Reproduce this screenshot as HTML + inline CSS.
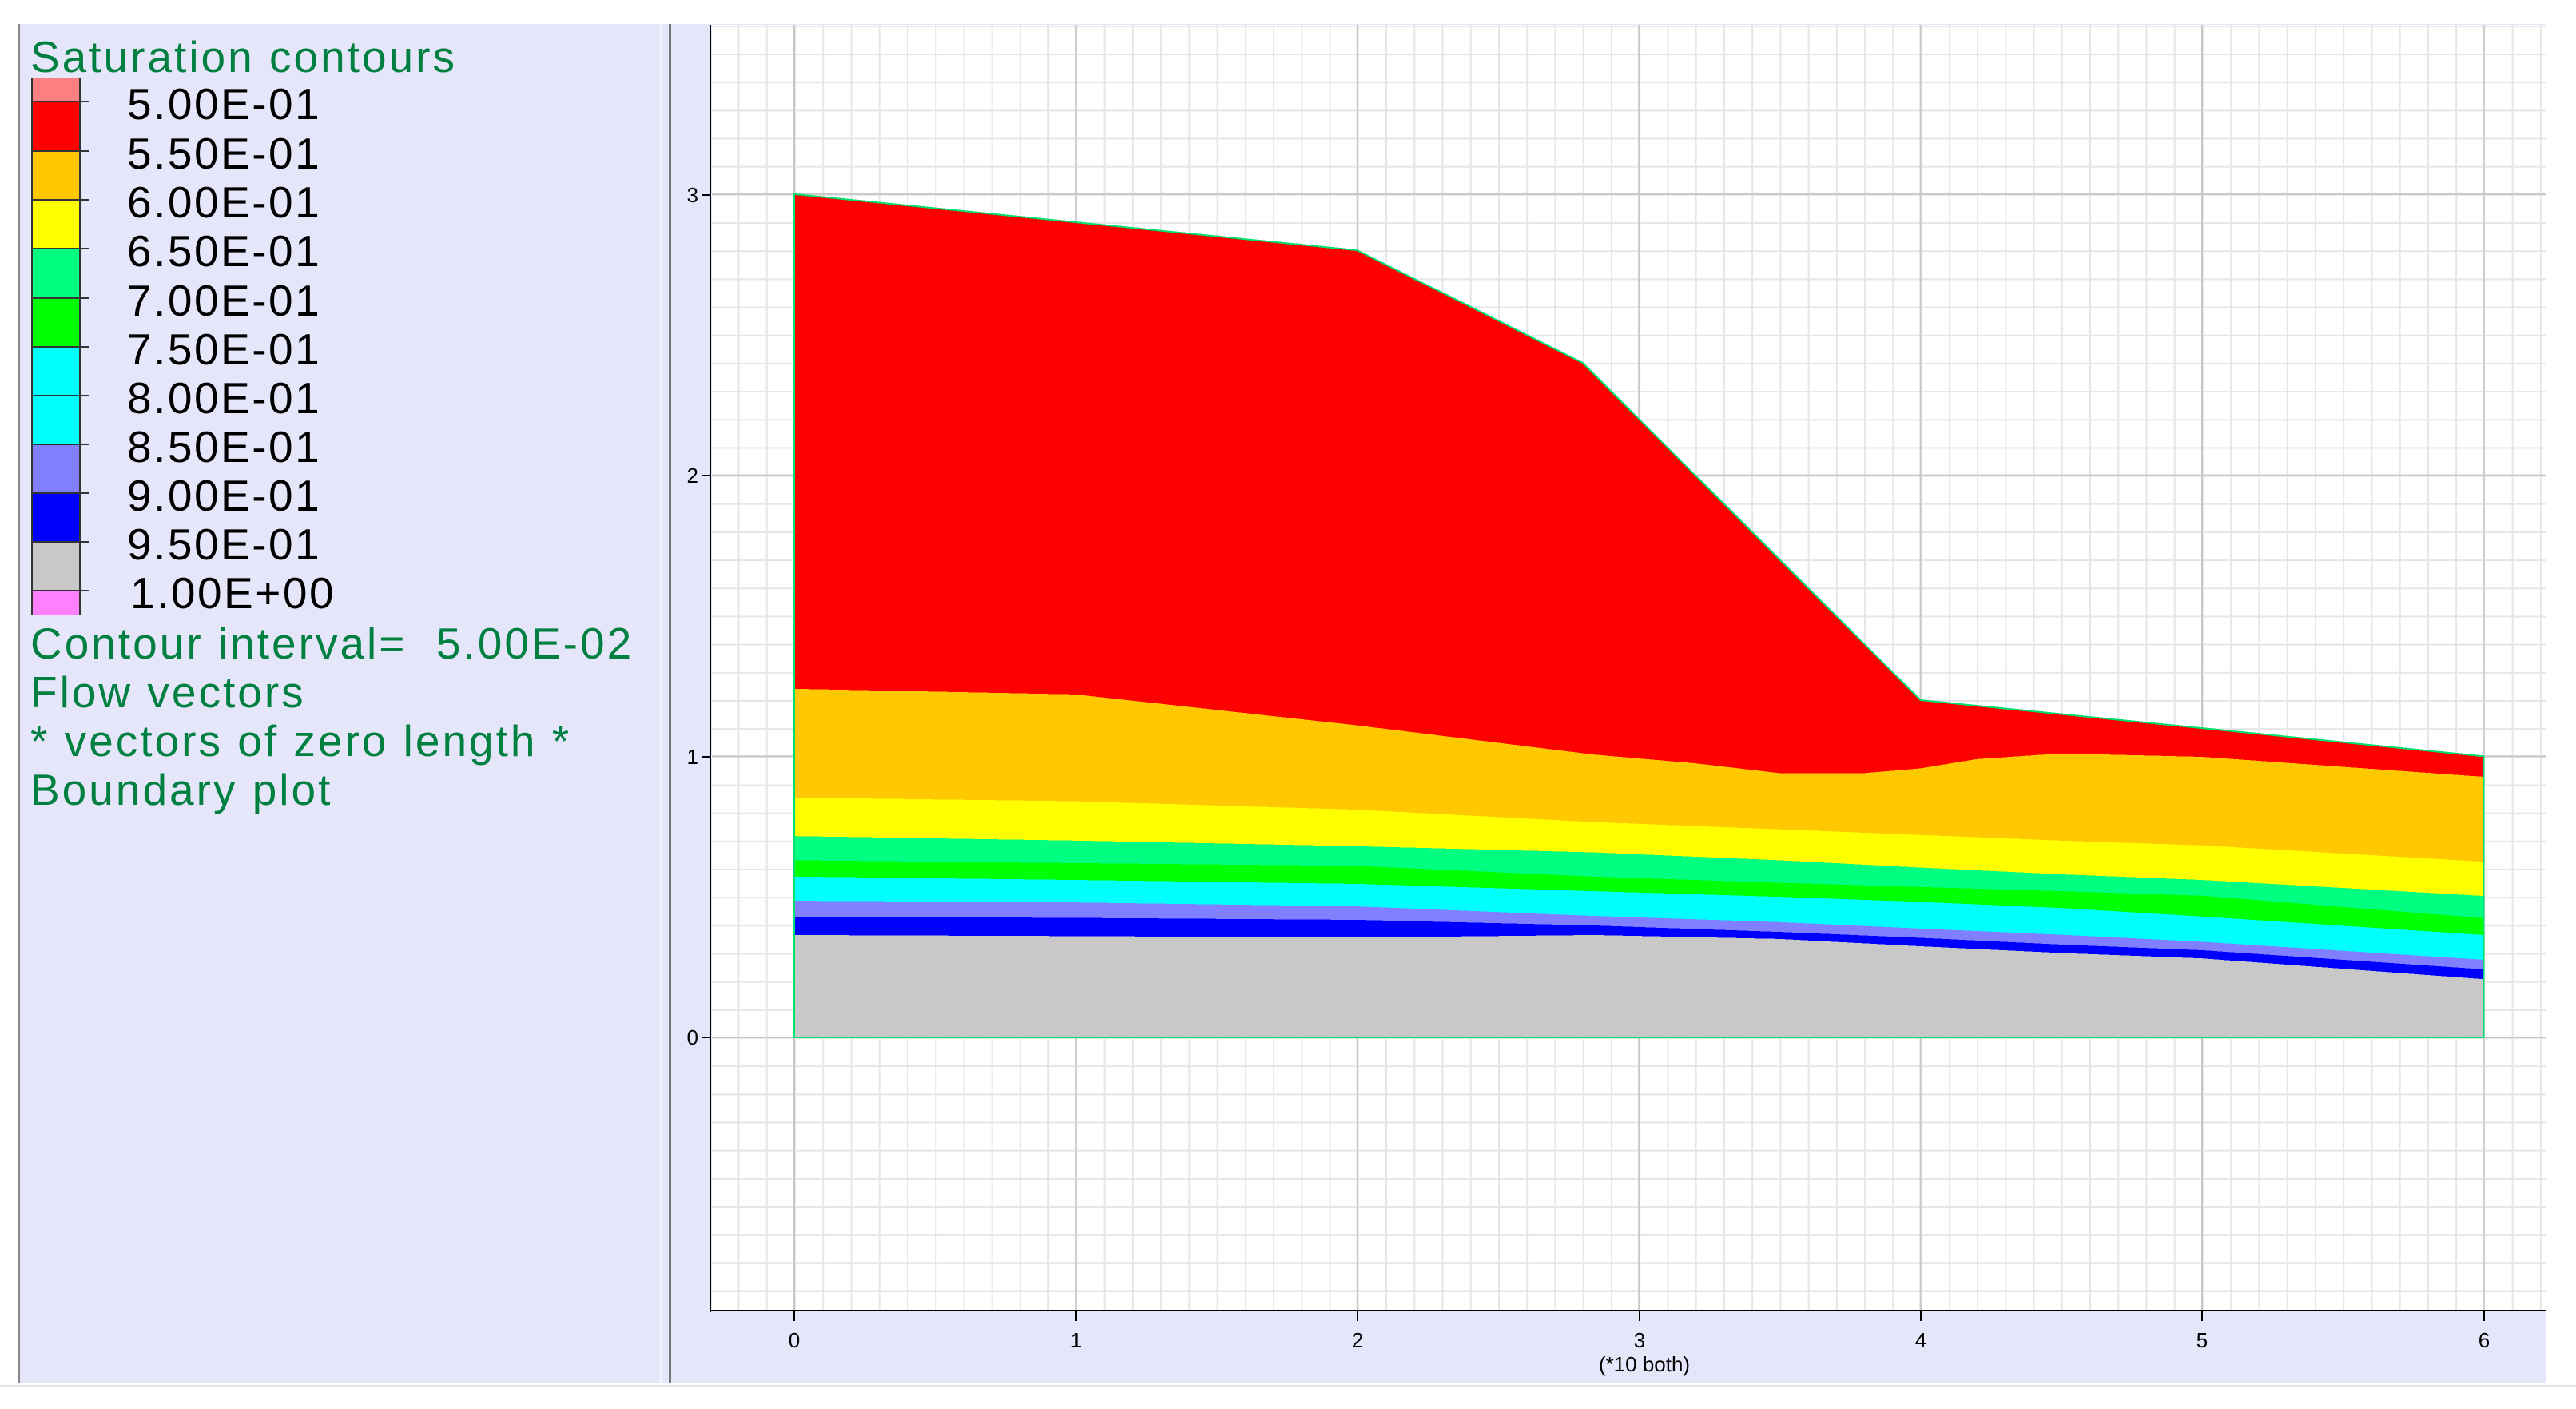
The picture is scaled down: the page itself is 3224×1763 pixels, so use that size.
<!DOCTYPE html>
<html><head><meta charset="utf-8"><style>
html,body{margin:0;padding:0;background:#fff;width:3224px;height:1763px;overflow:hidden}
svg{display:block}
text{font-family:"Liberation Sans",Arial,sans-serif}
</style></head><body>
<svg width="3224" height="1763" viewBox="0 0 3224 1763" xmlns="http://www.w3.org/2000/svg">
<defs>
<pattern id="minor" patternUnits="userSpaceOnUse" x="994" y="1298" width="35.24" height="35.17">
<rect x="0" y="0" width="2" height="35.17" fill="#e6e6e6"/>
<rect x="0" y="0" width="35.24" height="2" fill="#e6e6e6"/>
</pattern>
<pattern id="major" patternUnits="userSpaceOnUse" x="993" y="1297" width="352.4" height="351.7">
<rect x="0" y="0" width="2" height="351.7" fill="#c8c8c8"/>
<rect x="0" y="0" width="352.4" height="2" fill="#c8c8c8"/>
</pattern>
</defs>
<rect x="22" y="30" width="3164" height="1701" fill="#e6e6fa"/>
<rect x="22" y="30" width="3" height="1701" fill="#888"/>
<rect x="826" y="30" width="3" height="1701" fill="#f4f4fc"/>
<rect x="837" y="30" width="3" height="1701" fill="#777"/>
<rect x="891" y="31" width="2295" height="1609" fill="#fff"/>
<rect x="891" y="31" width="2295" height="1609" fill="url(#minor)"/>
<rect x="891" y="31" width="2295" height="1609" fill="url(#major)"/>
<rect x="0" y="1731" width="3224" height="32" fill="#fff"/>
<rect x="0" y="1733" width="3224" height="3" fill="#e4e4e4"/>

<g transform="translate(994,1298) scale(352.4,-351.7)" shape-rendering="crispEdges">
<polygon fill="#c8c8c8" points="0,0 0,3 2,2.8 2.8,2.4 4,1.2 6,1.0 6,0"/>
<polygon fill="#0000ff" points="0,3 2,2.8 2.8,2.4 4,1.2 6,1.0 6,0.207 5,0.281 4.5,0.30 4,0.324 3.5,0.35 2.84,0.364 2,0.355 1,0.36 0,0.364"/>
<polygon fill="#8080ff" points="0,3 2,2.8 2.8,2.4 4,1.2 6,1.0 6,0.242 5,0.31 4.5,0.33 4,0.354 3.5,0.375 2.84,0.398 2,0.418 1,0.425 0,0.43"/>
<polygon fill="#00ffff" points="0,3 2,2.8 2.8,2.4 4,1.2 6,1.0 6,0.276 5,0.34 4.5,0.365 4,0.387 3.5,0.41 2.84,0.432 2,0.466 1,0.48 0,0.486"/>
<polygon fill="#00ff00" points="0,3 2,2.8 2.8,2.4 4,1.2 6,1.0 6,0.364 5,0.43 4.5,0.46 4,0.482 3.5,0.50 2.84,0.52 2,0.546 1,0.56 0,0.572"/>
<polygon fill="#00ff80" points="0,3 2,2.8 2.8,2.4 4,1.2 6,1.0 6,0.424 5,0.504 4.5,0.52 4,0.535 3.5,0.55 2.84,0.572 2,0.61 1,0.62 0,0.63"/>
<polygon fill="#ffff00" points="0,3 2,2.8 2.8,2.4 4,1.2 6,1.0 6,0.503 5,0.56 4.5,0.58 4,0.604 3.5,0.63 2.84,0.658 2,0.68 1,0.70 0,0.716"/>
<polygon fill="#ffc800" points="0,3 2,2.8 2.8,2.4 4,1.2 6,1.0 6,0.625 5,0.683 4.5,0.70 4,0.72 3.5,0.74 2.84,0.766 2,0.81 1,0.84 0,0.853"/>
<polygon fill="#ff0000" points="0,3 2,2.8 2.8,2.4 4,1.2 6,1.0 6,0.927 5,0.998 4.5,1.01 4.2,0.99 4,0.957 3.8,0.94 3.5,0.94 3.2,0.975 2.84,1.006 2,1.11 1,1.22 0,1.24"/>
<polygon fill="none" stroke="#00e070" stroke-width="2" vector-effect="non-scaling-stroke" points="0,0 0,3 2,2.8 2.8,2.4 4,1.2 6,1.0 6,0"/>
</g>

<rect x="888" y="31" width="2" height="1611" fill="#000"/>
<rect x="888" y="1639" width="2298" height="2" fill="#000"/>
<g fill="#000">
<rect x="878" y="1297" width="11" height="2"/>
<rect x="878" y="946" width="11" height="2"/>
<rect x="878" y="594" width="11" height="2"/>
<rect x="878" y="243" width="11" height="2"/>
<rect x="993" y="1641" width="2" height="12"/>
<rect x="1346" y="1641" width="2" height="12"/>
<rect x="1698" y="1641" width="2" height="12"/>
<rect x="2051" y="1641" width="2" height="12"/>
<rect x="2403" y="1641" width="2" height="12"/>
<rect x="2755" y="1641" width="2" height="12"/>
<rect x="3108" y="1641" width="2" height="12"/>
</g>
<g font-size="26" fill="#000">
<text x="874" y="1307" text-anchor="end">0</text>
<text x="874" y="956" text-anchor="end">1</text>
<text x="874" y="604" text-anchor="end">2</text>
<text x="874" y="253" text-anchor="end">3</text>
<g text-anchor="middle">
<text x="994" y="1686">0</text>
<text x="1347" y="1686">1</text>
<text x="1699" y="1686">2</text>
<text x="2052" y="1686">3</text>
<text x="2404" y="1686">4</text>
<text x="2756" y="1686">5</text>
<text x="3109" y="1686">6</text>
<text x="2058" y="1716">(*10 both)</text>
</g>
</g>

<g shape-rendering="crispEdges">
<rect x="40" y="97" width="60" height="30" fill="#ff8080"/>
<rect x="40" y="127" width="60" height="62" fill="#ff0000"/>
<rect x="40" y="189" width="60" height="61" fill="#ffc800"/>
<rect x="40" y="250" width="60" height="61" fill="#ffff00"/>
<rect x="40" y="311" width="60" height="62" fill="#00ff80"/>
<rect x="40" y="373" width="60" height="61" fill="#00ff00"/>
<rect x="40" y="434" width="60" height="61" fill="#00ffff"/>
<rect x="40" y="495" width="60" height="61" fill="#00ffff"/>
<rect x="40" y="556" width="60" height="61" fill="#8080ff"/>
<rect x="40" y="617" width="60" height="61" fill="#0000ff"/>
<rect x="40" y="678" width="60" height="61" fill="#c8c8c8"/>
<rect x="40" y="739" width="60" height="31" fill="#ff80ff"/>
<rect x="39" y="97" width="2" height="673" fill="#333"/>
<rect x="99" y="97" width="2" height="673" fill="#333"/>
<g fill="#333">
<rect x="40" y="126" width="72" height="2"/>
<rect x="40" y="188" width="72" height="2"/>
<rect x="40" y="249" width="72" height="2"/>
<rect x="40" y="310" width="72" height="2"/>
<rect x="40" y="372" width="72" height="2"/>
<rect x="40" y="433" width="72" height="2"/>
<rect x="40" y="494" width="72" height="2"/>
<rect x="40" y="555" width="72" height="2"/>
<rect x="40" y="616" width="72" height="2"/>
<rect x="40" y="677" width="72" height="2"/>
<rect x="40" y="738" width="72" height="2"/>
</g>
</g>
<g font-size="55" fill="#000" letter-spacing="2.5">
<text x="159" y="149">5.00E-01</text>
<text x="159" y="211">5.50E-01</text>
<text x="159" y="272">6.00E-01</text>
<text x="159" y="333">6.50E-01</text>
<text x="159" y="395">7.00E-01</text>
<text x="159" y="456">7.50E-01</text>
<text x="159" y="517">8.00E-01</text>
<text x="159" y="578">8.50E-01</text>
<text x="159" y="639">9.00E-01</text>
<text x="159" y="700">9.50E-01</text>
<text x="163" y="761">1.00E+00</text>
</g>
<g font-size="55" fill="#008040" letter-spacing="3">
<text x="38" y="90">Saturation contours</text>
<text x="38" y="824" xml:space="preserve">Contour interval=&#160;&#160;5.00E-02</text>
<text x="38" y="885">Flow vectors</text>
<text x="38" y="946">* vectors of zero length *</text>
<text x="38" y="1007">Boundary plot</text>
</g>
</svg>
</body></html>
